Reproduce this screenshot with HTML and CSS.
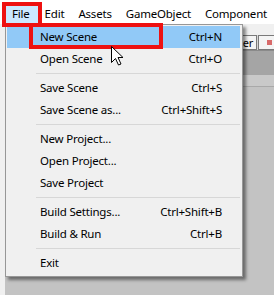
FILE: index.html
```html
<!DOCTYPE html>
<html lang="en">
<head>
    <meta charset="UTF-8">
    <title>File menu</title>
    <link rel="stylesheet" href="styles.css">
</head>
<body>
    <div class="screen">
        <!-- Menu bar -->
        <div class="menubar">
            <span class="menubar-item active">File</span>
            <span class="menubar-item">Edit</span>
            <span class="menubar-item">Assets</span>
            <span class="menubar-item">GameObject</span>
            <span class="menubar-item">Component</span>
        </div>

        <!-- Editor behind the menu -->
        <div class="workspace">
            <div class="side"></div>
            <div class="panel">
                <div class="strip"></div>
                <div class="toolbar">
                    <span class="tool">Filter</span>
                    <span class="tool tool-icon"><span class="dot"></span></span>
                </div>
                <div class="band-dark"></div>
                <div class="band-light"></div>
                <div class="band-rest"></div>
            </div>
        </div>

        <!-- Dropdown -->
        <div class="dropdown">
            <div class="item hover"><span>New Scene</span><span>Ctrl+N</span></div>
            <div class="item"><span>Open Scene</span><span>Ctrl+O</span></div>
            <div class="sep"></div>
            <div class="item"><span>Save Scene</span><span>Ctrl+S</span></div>
            <div class="item"><span>Save Scene as...</span><span>Ctrl+Shift+S</span></div>
            <div class="sep"></div>
            <div class="item"><span>New Project...</span></div>
            <div class="item"><span>Open Project...</span></div>
            <div class="item"><span>Save Project</span></div>
            <div class="sep"></div>
            <div class="item"><span>Build Settings...</span><span>Ctrl+Shift+B</span></div>
            <div class="item"><span>Build &amp; Run</span><span>Ctrl+B</span></div>
            <div class="sep"></div>
            <div class="item"><span>Exit</span></div>
        </div>

        <!-- Red highlight boxes -->
        <div class="mark mark-file"></div>
        <div class="mark mark-new"></div>

        <!-- Mouse pointer -->
        <svg class="cursor" width="13" height="20" viewBox="0 0 13 20">
            <path d="M0.5 0.5 L0.5 16.5 L4.5 12.5 L7.5 19 L10 18 L7 11.5 L12 11.5 Z" fill="#fff" stroke="#000" stroke-width="1" stroke-linejoin="miter"/>
        </svg>
    </div>
</body>
</html>
```

FILE: styles.css
```css
body {
    margin: 0;
    font-family: "Noto Sans", "Open Sans", sans-serif;
    font-size: 11.5px;
    letter-spacing: -0.2px;
    color: #000;
}
.screen {
    position: relative;
    width: 274px;
    height: 295px;
    overflow: hidden;
    display: flex;
    flex-direction: column;
    background-color: #c3c3c3;
}
.menubar {
    display: flex;
    height: 24px;
    padding-left: 5px;
    background-color: #fff;
    white-space: nowrap;
}
.menubar-item {
    margin-top: 5px;
    height: 18px;
    line-height: 17px;
    padding: 0 7px;
}
.menubar-item.active {
    background-color: #cce8ff;
    padding-right: 8px;
}
.workspace {
    flex: 1;
    display: flex;
}
.side {
    width: 5px;
    background-color: #f0f0f0;
}
.panel {
    flex: 1;
    display: flex;
    flex-direction: column;
}
.strip {
    height: 11px;
    background-color: #f0f0f0;
}
.toolbar {
    height: 15px;
    display: flex;
    justify-content: flex-end;
    background-color: #d6d6d6;
    border-bottom: 1px solid #8a8a8a;
    margin-right: -6px;
}
.tool {
    height: 13px;
    line-height: 13px;
    padding: 0 3px;
    border: 1px solid #7a7a7a;
    background-color: #f4f4f4;
    font-size: 11px;
}
.tool-icon {
    width: 14px;
    margin-left: 1px;
    display: flex;
    align-items: center;
    justify-content: center;
}
.dot {
    width: 5px;
    height: 5px;
    background-color: #d86a6a;
}
.band-dark {
    height: 24px;
    background-color: #a5a5a5;
}
.band-light {
    height: 11px;
    background-color: #c9c9c9;
    border-bottom: 1px solid #a9a9a9;
}
.band-rest {
    flex: 1;
    background-color: #c3c3c3;
}
.dropdown {
    position: absolute;
    left: 5px;
    top: 24px;
    width: 233px;
    padding: 1px 2px 2px 1px;
    background-color: #f0f0f0;
    border: 1px solid #979797;
    box-shadow: 3px 3px 3px rgba(0, 0, 0, 0.45);
}
.item {
    display: flex;
    justify-content: space-between;
    height: 22px;
    line-height: 22px;
    padding: 0 18px 0 33px;
    white-space: nowrap;
}
.item.hover {
    background-color: #91c9f7;
}
.sep {
    height: 7px;
    margin-left: 29px;
    display: flex;
    align-items: center;
}
.sep::after {
    content: "";
    flex: 1;
    height: 1px;
    background-color: #d7d7d7;
}
.mark {
    position: absolute;
    border: 4px solid #ee1111;
    box-sizing: border-box;
}
.mark-file {
    left: 2px;
    top: 2px;
    width: 40px;
    height: 25px;
}
.mark-new {
    left: 29px;
    top: 23px;
    width: 134px;
    height: 26px;
}
.cursor {
    position: absolute;
    left: 111px;
    top: 46px;
}
```
